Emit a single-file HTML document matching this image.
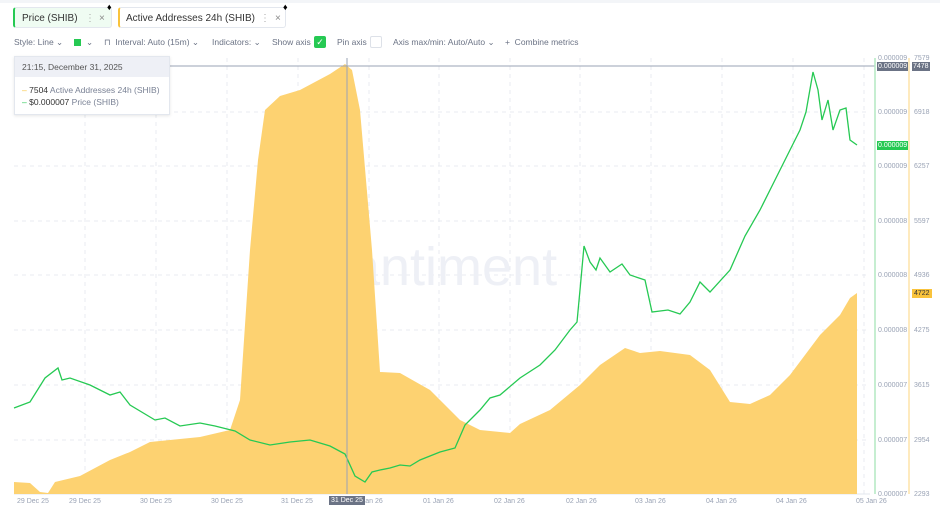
<!DOCTYPE html>
<html><head><style>
body{margin:0;width:940px;height:519px;background:#fff;font-family:"Liberation Sans",sans-serif;overflow:hidden;position:relative}
.t{position:absolute;font-size:7px;color:#9aa3b5;white-space:nowrap;line-height:9px}
.tab{position:absolute;top:7px;height:21px;border:1px solid #e3e7ee;border-radius:3px;font-size:10px;color:#333;line-height:21px;white-space:nowrap;box-sizing:border-box}
.tab span{position:absolute}
.tb{position:absolute;top:37px;font-size:8.5px;color:#6b7385;white-space:nowrap}
</style></head><body>
<div style="position:absolute;left:0;top:0;width:940px;height:3px;background:#f3f5f8"></div>
<div class="tab" style="left:13px;width:99px;background:#effcf2;border-left:2px solid #26c953"><span style="left:7px">Price (SHIB)</span><span style="left:70px;color:#aaa">⋮</span><span style="left:84px;color:#888">×</span></div>
<div class="tab" style="left:118px;width:168px;border-left:2px solid #f9c33c"><span style="left:6px">Active Addresses 24h (SHIB)</span><span style="left:140px;color:#aaa">⋮</span><span style="left:155px;color:#888">×</span></div>
<div style="position:absolute;left:107px;top:2px;font-size:9px">♦</div>
<div style="position:absolute;left:283px;top:2px;font-size:9px">♦</div>
<div class="tb" style="left:14px">Style: Line ⌄</div>
<div style="position:absolute;left:74px;top:39px;width:7px;height:7px;background:#26c953"></div>
<div class="tb" style="left:86px">⌄</div>
<div class="tb" style="left:104px">⊓ &nbsp;Interval: Auto (15m) ⌄</div>
<div class="tb" style="left:212px">Indicators: ⌄</div>
<div class="tb" style="left:272px">Show axis</div>
<div style="position:absolute;left:314px;top:36px;width:12px;height:12px;background:#26c953;border-radius:2px;color:#fff;font-size:9px;text-align:center;line-height:12px">✓</div>
<div class="tb" style="left:337px">Pin axis</div>
<div style="position:absolute;left:370px;top:36px;width:10px;height:10px;border:1px solid #dde1e8;border-radius:2px"></div>
<div class="tb" style="left:393px">Axis max/min: Auto/Auto ⌄</div>
<div class="tb" style="left:505px">+ &nbsp;Combine metrics</div>
<svg style="position:absolute;left:0;top:0" width="940" height="519">
<g stroke="#e8ebf0" stroke-dasharray="4 4" stroke-width="1">
<line x1="14" y1="112" x2="870" y2="112"/><line x1="14" y1="166" x2="870" y2="166"/><line x1="14" y1="221" x2="870" y2="221"/><line x1="14" y1="275" x2="870" y2="275"/><line x1="14" y1="330" x2="870" y2="330"/><line x1="14" y1="385" x2="870" y2="385"/><line x1="14" y1="440" x2="870" y2="440"/>
<line x1="85" y1="58" x2="85" y2="494"/><line x1="156" y1="58" x2="156" y2="494"/><line x1="227" y1="58" x2="227" y2="494"/><line x1="298" y1="58" x2="298" y2="494"/><line x1="369" y1="58" x2="369" y2="494"/><line x1="439" y1="58" x2="439" y2="494"/><line x1="510" y1="58" x2="510" y2="494"/><line x1="580" y1="58" x2="580" y2="494"/><line x1="651" y1="58" x2="651" y2="494"/><line x1="722" y1="58" x2="722" y2="494"/><line x1="793" y1="58" x2="793" y2="494"/><line x1="864" y1="58" x2="864" y2="494"/>
</g>
<line x1="14" y1="494" x2="870" y2="494" stroke="#e3e7ee"/>
<text x="305" y="285" font-size="54" fill="#eef0f6" font-family="Liberation Sans">·santiment</text>
<polygon fill="#fdd271" points="14,494 14,482 30,483 40,492 48,493 55,482 80,476 110,460 130,452 150,442 200,437 230,430 240,400 250,250 258,160 265,110 280,96 300,90 330,74 345,64 352,70 360,110 372,250 380,372 400,373 430,390 460,420 480,430 510,433 520,424 550,410 580,385 600,365 625,348 640,353 660,351 690,355 710,370 730,402 750,404 770,395 790,375 820,335 840,315 850,298 857,293 857,494"/>
<polyline fill="none" stroke="#26c953" stroke-width="1.3" points="14,408 30,402 45,378 58,368 62,380 70,378 90,385 110,395 120,392 130,405 155,420 165,418 180,426 200,423 215,426 235,431 250,440 270,445 290,442 310,440 330,446 345,454 355,476 365,482 372,472 380,470 390,468 400,465 410,466 420,460 440,452 455,448 465,425 480,410 490,398 500,395 520,378 540,365 555,350 570,330 577,322 580,290 584,246 590,262 596,270 600,258 610,272 622,264 630,275 645,280 652,312 668,310 680,314 690,302 700,282 710,292 730,270 745,236 760,210 775,180 790,150 800,130 806,112 813,72 818,90 822,120 828,100 833,130 840,110 846,108 850,140 857,145"/>
<line x1="14" y1="66" x2="875" y2="66" stroke="#9aa3b5"/>
<line x1="347" y1="58" x2="347" y2="494" stroke="#9aa3b5"/>
<line x1="875" y1="58" x2="875" y2="494" stroke="#b4e8c2" stroke-width="1.5"/>
<line x1="909" y1="58" x2="909" y2="494" stroke="#fde3a8" stroke-width="1.5"/>
</svg>
<div style="position:absolute;left:14px;top:56px;width:154px;height:57px;background:#fff;border:1px solid #e3e7ee;box-shadow:0 1px 3px rgba(0,0,0,.1)">
<div style="background:#eef0f6;height:20px;line-height:20px;font-size:8.5px;color:#555;padding-left:7px">21:15, December 31, 2025</div>
<div style="font-size:8.5px;padding:7px 0 0 7px;line-height:12px;color:#7a8295;white-space:nowrap"><span style="color:#f9c33c">–</span> <span style="color:#333">7504</span> Active Addresses 24h (SHIB)<br><span style="color:#26c953">–</span> <span style="color:#333">$0.000007</span> Price (SHIB)</div></div>
<div class="t" style="left:878px;top:54px">0.000009</div><div class="t" style="left:914px;top:54px">7579</div>
<div class="t" style="left:877px;top:62px;background:#6b7385;color:#fff;padding:0 1px">0.000009</div><div class="t" style="left:912px;top:62px;background:#6b7385;color:#fff;padding:0 1px">7478</div>
<div class="t" style="left:878px;top:108px">0.000009</div><div class="t" style="left:914px;top:108px">6918</div>
<div class="t" style="left:877px;top:141px;background:#26c953;color:#fff;padding:0 1px">0.000009</div>
<div class="t" style="left:878px;top:162px">0.000009</div><div class="t" style="left:914px;top:162px">6257</div>
<div class="t" style="left:878px;top:217px">0.000008</div><div class="t" style="left:914px;top:217px">5597</div>
<div class="t" style="left:878px;top:271px">0.000008</div><div class="t" style="left:914px;top:271px">4936</div>
<div class="t" style="left:912px;top:289px;background:#f9c33c;color:#333;padding:0 2px">4722</div>
<div class="t" style="left:878px;top:326px">0.000008</div><div class="t" style="left:914px;top:326px">4275</div>
<div class="t" style="left:878px;top:381px">0.000007</div><div class="t" style="left:914px;top:381px">3615</div>
<div class="t" style="left:878px;top:436px">0.000007</div><div class="t" style="left:914px;top:436px">2954</div>
<div class="t" style="left:878px;top:490px">0.000007</div><div class="t" style="left:914px;top:490px">2293</div>
<div class="t" style="left:17px;top:497px">29 Dec 25</div><div class="t" style="left:69px;top:497px">29 Dec 25</div><div class="t" style="left:140px;top:497px">30 Dec 25</div><div class="t" style="left:211px;top:497px">30 Dec 25</div><div class="t" style="left:281px;top:497px">31 Dec 25</div><div class="t" style="left:352px;top:497px">01 Jan 26</div>
<div class="t" style="left:329px;top:496px;background:#6b7385;color:#fff;padding:0 2px">31 Dec 25</div>
<div class="t" style="left:423px;top:497px">01 Jan 26</div><div class="t" style="left:494px;top:497px">02 Jan 26</div><div class="t" style="left:566px;top:497px">02 Jan 26</div><div class="t" style="left:635px;top:497px">03 Jan 26</div><div class="t" style="left:706px;top:497px">04 Jan 26</div><div class="t" style="left:776px;top:497px">04 Jan 26</div><div class="t" style="left:856px;top:497px">05 Jan 26</div>
</body></html>
